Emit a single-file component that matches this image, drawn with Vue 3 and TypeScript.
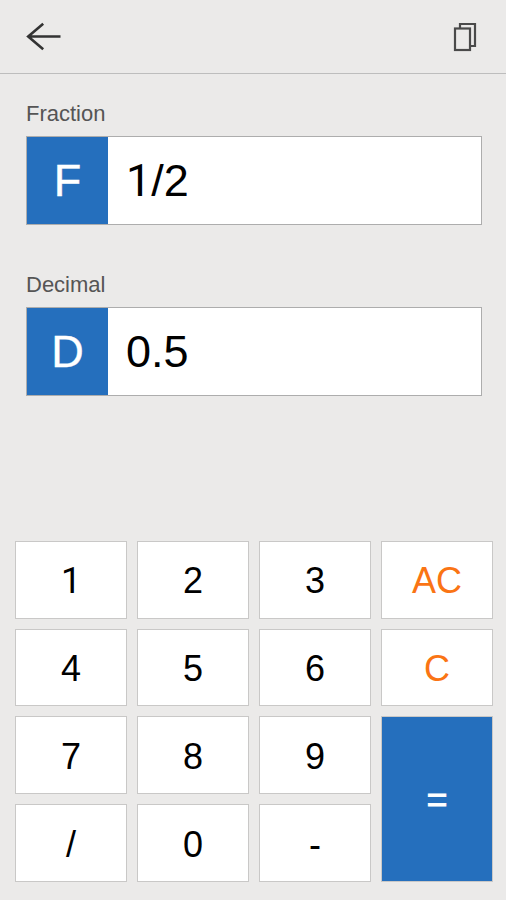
<script setup lang="ts">
interface Field {
  label: string
  badge: string
  value: string
}

interface Key {
  text: string
  kind: 'digit' | 'clear' | 'equals'
}

const fields: Field[] = [
  { label: 'Fraction', badge: 'F', value: '1/2' },
  { label: 'Decimal', badge: 'D', value: '0.5' },
]

const keys: Key[] = [
  { text: '1', kind: 'digit' },
  { text: '2', kind: 'digit' },
  { text: '3', kind: 'digit' },
  { text: 'AC', kind: 'clear' },
  { text: '4', kind: 'digit' },
  { text: '5', kind: 'digit' },
  { text: '6', kind: 'digit' },
  { text: 'C', kind: 'clear' },
  { text: '7', kind: 'digit' },
  { text: '8', kind: 'digit' },
  { text: '9', kind: 'digit' },
  { text: '=', kind: 'equals' },
  { text: '/', kind: 'digit' },
  { text: '0', kind: 'digit' },
  { text: '-', kind: 'digit' },
]
</script>

<template>
  <div class="screen">
    <header class="bar">
      <button class="icon-button" aria-label="Back">
        <svg width="36" height="30" viewBox="0 0 36 30" fill="none" stroke="#333" stroke-width="2.6">
          <path d="M34.5 14.5H2.2M17.2 1.8L2.2 14.5L17.2 27.2" />
        </svg>
      </button>
      <button class="icon-button" aria-label="Copy">
        <svg width="24" height="30" viewBox="0 0 24 30" fill="none" stroke="#4a4a4a" stroke-width="2.2">
          <path d="M7 6V2H22V24H18" />
          <rect x="2" y="6.5" width="15" height="21.5" />
        </svg>
      </button>
    </header>

    <main class="fields">
      <section v-for="field in fields" :key="field.label" class="field">
        <div class="label">{{ field.label }}</div>
        <div class="box">
          <div class="badge">{{ field.badge }}</div>
          <div class="value">
            <span v-for="(char, i) in field.value" :key="i" :class="{ one: char === '1' }">{{ char }}</span>
          </div>
        </div>
      </section>
    </main>

    <div class="keypad">
      <button v-for="key in keys" :key="key.text" class="key" :class="key.kind">
        <span :class="{ one: key.text === '1' }">{{ key.text }}</span>
      </button>
    </div>
  </div>
</template>

<style>
body {
  background: #ebeae9;
}
</style>

<style scoped>
.screen {
  box-sizing: border-box;
  display: flex;
  flex-direction: column;
  height: 900px;
  padding-bottom: 18px;
  background: #ebeae9;
  font-family: "Liberation Sans", Arial, sans-serif;
}

button {
  margin: 0;
  padding: 0;
  border: 0;
  background: none;
  font: inherit;
}

.bar {
  box-sizing: border-box;
  display: flex;
  align-items: center;
  justify-content: space-between;
  height: 74px;
  padding: 0 29px 0 26px;
  border-bottom: 1px solid #bdbdbd;
}

.icon-button,
.icon-button svg {
  display: block;
}

.fields {
  display: flex;
  flex: 1;
  flex-direction: column;
  gap: 46px;
  padding: 26px 24px 0 26px;
}

.label {
  height: 36px;
  color: #555;
  font-size: 22px;
  line-height: 28px;
}

.box {
  box-sizing: border-box;
  display: flex;
  height: 89px;
  border: 1px solid #adadad;
  background: #fff;
  font-size: 45px;
  line-height: 88px;
}

.badge {
  width: 81px;
  background: #256fbd;
  color: #fff;
  text-align: center;
  -webkit-text-stroke: 0.4px #fff;
}

.value {
  padding-left: 18px;
  color: #000;
}

/* Footless numeral one */
.one {
  font-family: Roboto, "Liberation Sans", sans-serif;
  line-height: 0;
}

.keypad {
  display: grid;
  grid-template-columns: repeat(4, 112px);
  grid-template-rows: repeat(4, 77.8px);
  gap: 10px;
  padding-left: 15px;
}

.key {
  padding-top: 2px;
  border: 1px solid #c9c8c7;
  background: #fff;
  color: #000;
  font-size: 36px;
  line-height: 73px;
}

.clear {
  color: #fa7414;
}

.equals {
  grid-row: span 2;
  padding-top: 0;
  background: #256fbd;
  color: #fff;
  -webkit-text-stroke: 0.8px #fff;
}
</style>
